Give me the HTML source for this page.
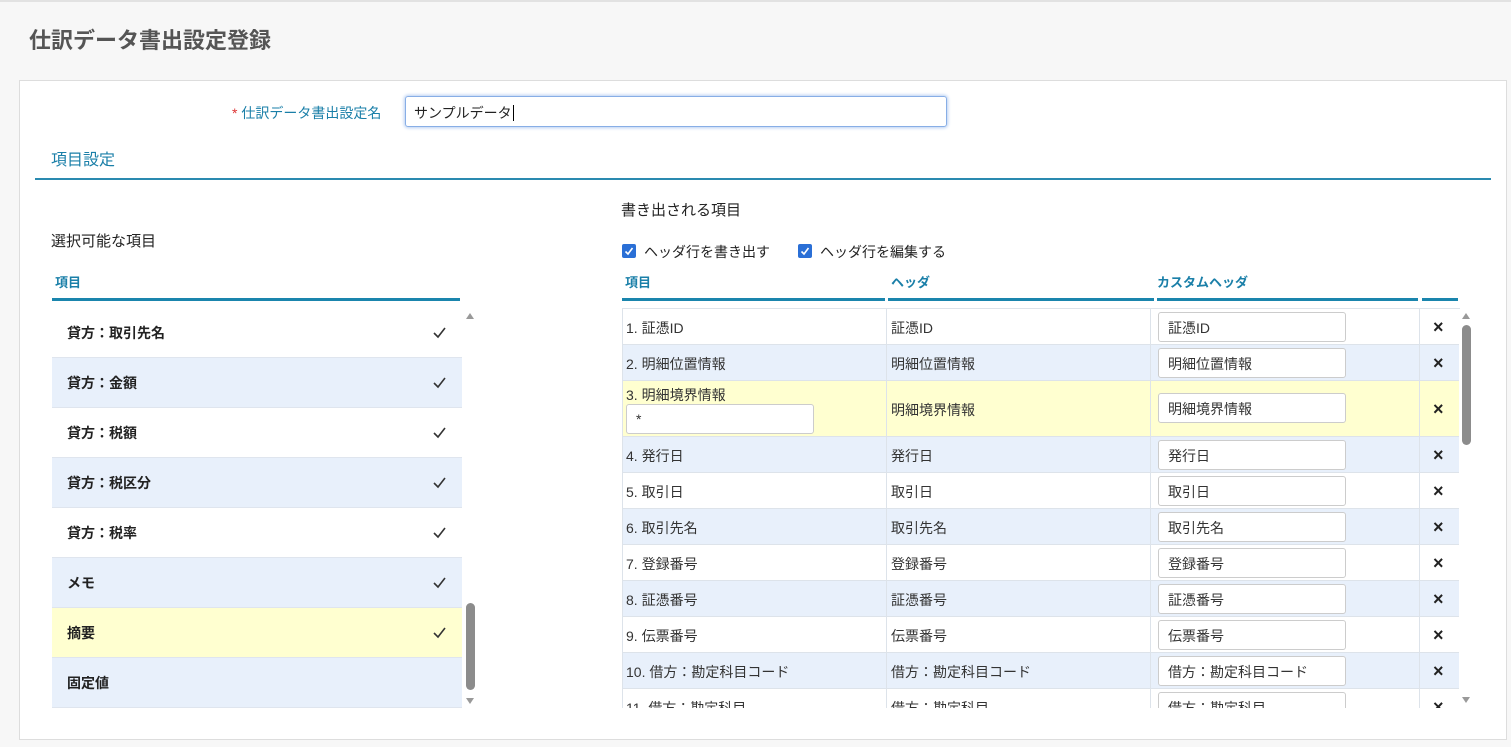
<!DOCTYPE html>
<html><head><meta charset="utf-8"><style>
*{box-sizing:border-box;margin:0;padding:0}
body{width:1511px;height:747px;background:#f7f7f7;font-family:"Liberation Sans","Noto Sans CJK JP",sans-serif;color:#333;position:relative;overflow:hidden;font-size:14px}
.a{position:absolute;white-space:nowrap}
.teal{color:#1a7fa8}
.bar{position:absolute;height:3px;background:#1a85ad;top:298px}
.lrow{position:absolute;left:52px;width:410px;height:50px;border-bottom:1px solid #dfe5ee;font-weight:bold;font-size:14px;color:#222;padding:15px 0 0 15px}
.lrow .ck{position:absolute;left:381px;top:18px;width:13px;height:13px}
.rrow{position:absolute;left:622px;width:837px;border-bottom:1px solid #dde3ea;font-size:14px;color:#333}
.c{position:absolute;top:0;height:100%;border-right:1px solid #dde3ea}
.inp{position:absolute;left:536px;width:188px;height:30px;background:#fff;border:1px solid #ccc;border-radius:3px;padding:6px 0 0 9px}
.x{position:absolute;left:811px;font-size:18px;font-weight:bold;color:#222;line-height:18px}
</style></head><body>
<div class="a" style="left:0;top:0;width:1511px;height:2px;background:#e2e2e2"></div>
<div class="a" style="left:29px;top:23px;font-size:22px;font-weight:bold;color:#555">仕訳データ書出設定登録</div>
<div class="a" style="left:19px;top:80px;width:1488px;height:660px;background:#fff;border:1px solid #ddd"></div>
<div class="a teal" style="left:232px;top:103px;font-size:14px"><span style="color:#d33">*</span> 仕訳データ書出設定名</div>
<div class="a" style="left:405px;top:96px;width:542px;height:31px;border:1px solid #88aee6;border-radius:3px;box-shadow:0 0 3px 1px #b7cff2;padding:6px 0 0 8px;font-size:14px;color:#222">サンプルデータ<span style="border-left:1px solid #000;margin-left:1px"></span></div>
<div class="a teal" style="left:51px;top:146px;font-size:16px">項目設定</div>
<div class="a" style="left:35px;top:178px;width:1456px;height:2px;background:#2a8ab0"></div>

<div class="a" style="left:51px;top:230px;font-size:15px;color:#222">選択可能な項目</div>
<div class="a teal" style="left:55px;top:272px;font-size:13px;font-weight:bold">項目</div>
<div class="bar" style="left:52px;width:408px"></div>
<div class="a" style="left:52px;top:308px;width:410px;height:400px;border:1px solid #e0e0e0;overflow:hidden"></div>
<div class="lrow" style="top:308px;background:#fff">貸方：取引先名<svg class="ck" viewBox="0 0 13 13"><path d="M1 7l4 4 7-9" stroke="#333" stroke-width="1.6" fill="none"/></svg></div>
<div class="lrow" style="top:358px;background:#e8f0fb">貸方：金額<svg class="ck" viewBox="0 0 13 13"><path d="M1 7l4 4 7-9" stroke="#333" stroke-width="1.6" fill="none"/></svg></div>
<div class="lrow" style="top:408px;background:#fff">貸方：税額<svg class="ck" viewBox="0 0 13 13"><path d="M1 7l4 4 7-9" stroke="#333" stroke-width="1.6" fill="none"/></svg></div>
<div class="lrow" style="top:458px;background:#e8f0fb">貸方：税区分<svg class="ck" viewBox="0 0 13 13"><path d="M1 7l4 4 7-9" stroke="#333" stroke-width="1.6" fill="none"/></svg></div>
<div class="lrow" style="top:508px;background:#fff">貸方：税率<svg class="ck" viewBox="0 0 13 13"><path d="M1 7l4 4 7-9" stroke="#333" stroke-width="1.6" fill="none"/></svg></div>
<div class="lrow" style="top:558px;background:#e8f0fb">メモ<svg class="ck" viewBox="0 0 13 13"><path d="M1 7l4 4 7-9" stroke="#333" stroke-width="1.6" fill="none"/></svg></div>
<div class="lrow" style="top:608px;background:#ffffd0">摘要<svg class="ck" viewBox="0 0 13 13"><path d="M1 7l4 4 7-9" stroke="#333" stroke-width="1.6" fill="none"/></svg></div>
<div class="lrow" style="top:658px;background:#e8f0fb">固定値</div>
<div class="a" style="left:466px;top:313px;border-left:4px solid transparent;border-right:4px solid transparent;border-bottom:6px solid #999"></div>
<div class="a" style="left:466px;top:603px;width:9px;height:87px;background:#8c8c8c;border-radius:5px"></div>
<div class="a" style="left:466px;top:698px;border-left:4px solid transparent;border-right:4px solid transparent;border-top:6px solid #999"></div>

<div class="a" style="left:621px;top:199px;font-size:15px;color:#222">書き出される項目</div>
<div class="a" style="left:622px;top:244px;width:14px;height:14px;background:#2a6fd6;border-radius:2px"><svg width="14" height="14" viewBox="0 0 14 14"><path d="M3.5 7.5l2.5 2.5 4.5-6" stroke="#fff" stroke-width="1.6" fill="none"/></svg></div>
<div class="a" style="left:644px;top:242px;font-size:14px;color:#222">ヘッダ行を書き出す</div>
<div class="a" style="left:798px;top:244px;width:14px;height:14px;background:#2a6fd6;border-radius:2px"><svg width="14" height="14" viewBox="0 0 14 14"><path d="M3.5 7.5l2.5 2.5 4.5-6" stroke="#fff" stroke-width="1.6" fill="none"/></svg></div>
<div class="a" style="left:820px;top:242px;font-size:14px;color:#222">ヘッダ行を編集する</div>
<div class="a teal" style="left:625px;top:272px;font-size:13px;font-weight:bold">項目</div>
<div class="a teal" style="left:891px;top:272px;font-size:13px;font-weight:bold">ヘッダ</div>
<div class="a teal" style="left:1157px;top:272px;font-size:13px;font-weight:bold">カスタムヘッダ</div>
<div class="bar" style="left:622px;width:263px"></div>
<div class="bar" style="left:888px;width:266px"></div>
<div class="bar" style="left:1157px;width:261px"></div>
<div class="bar" style="left:1422px;width:36px"></div>

<div class="a" style="left:622px;top:308px;width:838px;height:400px;overflow:hidden;border-top:1px solid #dde3ea;border-left:1px solid #dde3ea">
<div style="position:relative;left:-623px;top:-309px">
<div class="rrow" style="top:309px;height:36px;background:#fff"><div class="c" style="left:0;width:265px"></div><div class="c" style="left:265px;width:264px"></div><div class="c" style="left:529px;width:269px"></div><span class="a" style="left:4px;top:9px">1. 証憑ID</span><span class="a" style="left:269px;top:9px">証憑ID</span><div class="inp" style="top:3px;padding-top:5px">証憑ID</div><span class="x" style="top:9px">×</span></div>
<div class="rrow" style="top:345px;height:36px;background:#e8f0fb"><div class="c" style="left:0;width:265px"></div><div class="c" style="left:265px;width:264px"></div><div class="c" style="left:529px;width:269px"></div><span class="a" style="left:4px;top:9px">2. 明細位置情報</span><span class="a" style="left:269px;top:9px">明細位置情報</span><div class="inp" style="top:3px;padding-top:5px">明細位置情報</div><span class="x" style="top:9px">×</span></div>
<div class="rrow" style="top:381px;height:56px;background:#ffffd0"><div class="c" style="left:0;width:265px"></div><div class="c" style="left:265px;width:264px"></div><div class="c" style="left:529px;width:269px"></div><span class="a" style="left:4px;top:4px">3. 明細境界情報</span><div class="inp" style="top:23px;left:4px;width:188px">*</div><span class="a" style="left:269px;top:19px">明細境界情報</span><div class="inp" style="top:12px;padding-top:5px">明細境界情報</div><span class="x" style="top:19px">×</span></div>
<div class="rrow" style="top:437px;height:36px;background:#e8f0fb"><div class="c" style="left:0;width:265px"></div><div class="c" style="left:265px;width:264px"></div><div class="c" style="left:529px;width:269px"></div><span class="a" style="left:4px;top:9px">4. 発行日</span><span class="a" style="left:269px;top:9px">発行日</span><div class="inp" style="top:3px;padding-top:5px">発行日</div><span class="x" style="top:9px">×</span></div>
<div class="rrow" style="top:473px;height:36px;background:#fff"><div class="c" style="left:0;width:265px"></div><div class="c" style="left:265px;width:264px"></div><div class="c" style="left:529px;width:269px"></div><span class="a" style="left:4px;top:9px">5. 取引日</span><span class="a" style="left:269px;top:9px">取引日</span><div class="inp" style="top:3px;padding-top:5px">取引日</div><span class="x" style="top:9px">×</span></div>
<div class="rrow" style="top:509px;height:36px;background:#e8f0fb"><div class="c" style="left:0;width:265px"></div><div class="c" style="left:265px;width:264px"></div><div class="c" style="left:529px;width:269px"></div><span class="a" style="left:4px;top:9px">6. 取引先名</span><span class="a" style="left:269px;top:9px">取引先名</span><div class="inp" style="top:3px;padding-top:5px">取引先名</div><span class="x" style="top:9px">×</span></div>
<div class="rrow" style="top:545px;height:36px;background:#fff"><div class="c" style="left:0;width:265px"></div><div class="c" style="left:265px;width:264px"></div><div class="c" style="left:529px;width:269px"></div><span class="a" style="left:4px;top:9px">7. 登録番号</span><span class="a" style="left:269px;top:9px">登録番号</span><div class="inp" style="top:3px;padding-top:5px">登録番号</div><span class="x" style="top:9px">×</span></div>
<div class="rrow" style="top:581px;height:36px;background:#e8f0fb"><div class="c" style="left:0;width:265px"></div><div class="c" style="left:265px;width:264px"></div><div class="c" style="left:529px;width:269px"></div><span class="a" style="left:4px;top:9px">8. 証憑番号</span><span class="a" style="left:269px;top:9px">証憑番号</span><div class="inp" style="top:3px;padding-top:5px">証憑番号</div><span class="x" style="top:9px">×</span></div>
<div class="rrow" style="top:617px;height:36px;background:#fff"><div class="c" style="left:0;width:265px"></div><div class="c" style="left:265px;width:264px"></div><div class="c" style="left:529px;width:269px"></div><span class="a" style="left:4px;top:9px">9. 伝票番号</span><span class="a" style="left:269px;top:9px">伝票番号</span><div class="inp" style="top:3px;padding-top:5px">伝票番号</div><span class="x" style="top:9px">×</span></div>
<div class="rrow" style="top:653px;height:36px;background:#e8f0fb"><div class="c" style="left:0;width:265px"></div><div class="c" style="left:265px;width:264px"></div><div class="c" style="left:529px;width:269px"></div><span class="a" style="left:4px;top:9px">10. 借方：勘定科目コード</span><span class="a" style="left:269px;top:9px">借方：勘定科目コード</span><div class="inp" style="top:3px;padding-top:5px">借方：勘定科目コード</div><span class="x" style="top:9px">×</span></div>
<div class="rrow" style="top:689px;height:36px;background:#fff"><div class="c" style="left:0;width:265px"></div><div class="c" style="left:265px;width:264px"></div><div class="c" style="left:529px;width:269px"></div><span class="a" style="left:4px;top:9px">11. 借方：勘定科目</span><span class="a" style="left:269px;top:9px">借方：勘定科目</span><div class="inp" style="top:3px;padding-top:5px">借方：勘定科目</div><span class="x" style="top:9px">×</span></div>
</div></div>
<div class="a" style="left:1462px;top:313px;border-left:4px solid transparent;border-right:4px solid transparent;border-bottom:6px solid #999"></div>
<div class="a" style="left:1462px;top:325px;width:9px;height:120px;background:#8c8c8c;border-radius:5px"></div>
<div class="a" style="left:1462px;top:697px;border-left:4px solid transparent;border-right:4px solid transparent;border-top:6px solid #999"></div>
</body></html>
